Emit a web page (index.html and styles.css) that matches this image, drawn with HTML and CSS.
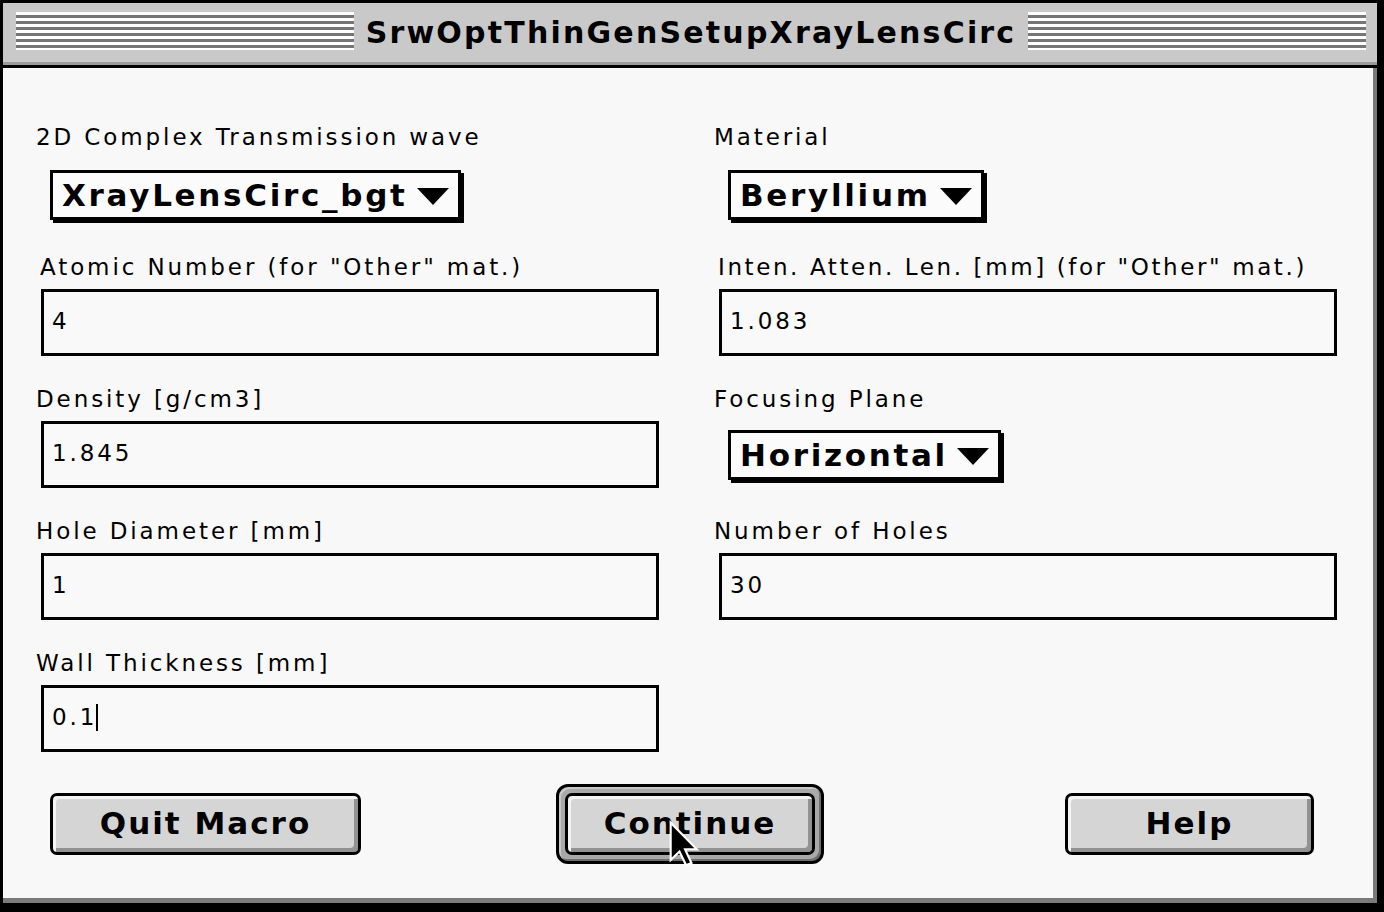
FILE: index.html
```html
<!DOCTYPE html>
<html>
<head>
<meta charset="utf-8">
<title>SrwOptThinGenSetupXrayLensCirc</title>
<link rel="stylesheet" href="styles.css">
</head>
<body>
<div class="window">
  <div class="titlebar">
    <div class="stripes"></div>
    <div class="title">SrwOptThinGenSetupXrayLensCirc</div>
    <div class="stripes"></div>
  </div>
  <div class="content">
    <div class="grid">
      <div class="field">
        <div class="label">2D Complex Transmission wave</div>
        <div class="popup popup-first"><span class="popup-text">XrayLensCirc_bgt</span><svg class="tri" viewBox="0 0 32 17" width="32" height="17"><polygon points="0,0 32,0 16,17" fill="#000"/></svg></div>
      </div>
      <div class="field">
        <div class="label">Material</div>
        <div class="popup popup-first"><span class="popup-text">Beryllium</span><svg class="tri" viewBox="0 0 32 17" width="32" height="17"><polygon points="0,0 32,0 16,17" fill="#000"/></svg></div>
      </div>

      <div class="field">
        <div class="label indent">Atomic Number (for "Other" mat.)</div>
        <div class="input">4</div>
      </div>
      <div class="field">
        <div class="label indent tight">Inten. Atten. Len. [mm] (for "Other" mat.)</div>
        <div class="input">1.083</div>
      </div>

      <div class="field">
        <div class="label">Density [g/cm3]</div>
        <div class="input">1.845</div>
      </div>
      <div class="field">
        <div class="label">Focusing Plane</div>
        <div class="popup popup-mid"><span class="popup-text">Horizontal</span><svg class="tri" viewBox="0 0 32 17" width="32" height="17"><polygon points="0,0 32,0 16,17" fill="#000"/></svg></div>
      </div>

      <div class="field">
        <div class="label">Hole Diameter [mm]</div>
        <div class="input">1</div>
      </div>
      <div class="field">
        <div class="label">Number of Holes</div>
        <div class="input">30</div>
      </div>

      <div class="field">
        <div class="label">Wall Thickness [mm]</div>
        <div class="input">0.1<span class="caret"></span></div>
      </div>
    </div>

    <div class="buttons">
      <div class="btn btn-wide">Quit Macro</div>
      <div class="ring"><div class="btn">Continue</div></div>
      <div class="btn btn-help">Help</div>
    </div>
  </div>
  <svg class="cursor" viewBox="0 0 12 18" width="32" height="48">
    <path d="M1 1 L1 15 L4.3 11.8 L6.8 17 L8.8 16.1 L6.4 11 L10.8 11 Z" fill="#000" stroke="#fff" stroke-width="0.8" stroke-linejoin="miter"/>
  </svg>
</div>
</body>
</html>
```

FILE: styles.css
```css
html, body {
  margin: 0;
  padding: 0;
  background: #000;
}

.window {
  position: relative;
  width: 1384px;
  height: 912px;
  box-sizing: border-box;
  padding: 3px 7px 9px 3px;
  background: #000;
  display: flex;
  flex-direction: column;
}

.titlebar {
  flex: none;
  height: 62px;
  box-sizing: border-box;
  display: flex;
  align-items: flex-start;
  gap: 12px;
  padding: 9px 11px 0 13px;
  background: #c9c9c9;
  border-bottom: 3px solid #9a9a9a;
  margin-bottom: 3px;
}

.stripes {
  flex: 1;
  height: 38px;
  background: repeating-linear-gradient(to bottom, #ffffff 0 3px, #767676 3px 6px);
}

.title {
  font-family: "DejaVu Sans", "Liberation Sans", sans-serif;
  font-weight: bold;
  font-size: 30px;
  letter-spacing: 2.2px;
  line-height: 38px;
  margin-top: 2px;
  color: #000;
  white-space: nowrap;
}

.content {
  flex: 1;
  background: #f8f8f8;
  border-right: 4px solid #7a7a7a;
  border-bottom: 5px solid #7a7a7a;
  padding: 56px 0 0 33px;
  font-family: "DejaVu Sans", "Liberation Sans", sans-serif;
  color: #000;
}

.grid {
  display: grid;
  grid-template-columns: 678px 1fr;
  row-gap: 30px;
}

.field {
  display: flex;
  flex-direction: column;
  align-items: flex-start;
}

.label {
  height: 26px;
  line-height: 26px;
  font-size: 23px;
  letter-spacing: 2.9px;
  white-space: nowrap;
}

.label.indent {
  padding-left: 4px;
}

.label.tight {
  letter-spacing: 2.6px;
}

.input {
  margin: 9px 0 0 5px;
  width: 618px;
  height: 67px;
  box-sizing: border-box;
  border: 3px solid #000;
  background: #f9f9f9;
  padding: 16px 0 0 8px;
  font-size: 23px;
  line-height: 26px;
  letter-spacing: 2.9px;
  white-space: nowrap;
}

.caret {
  display: inline-block;
  width: 2px;
  height: 27px;
  background: #000;
  vertical-align: -6px;
  margin-left: -1px;
}

.popup {
  display: inline-flex;
  align-items: center;
  gap: 9px;
  height: 50px;
  box-sizing: border-box;
  border: 3px solid #000;
  box-shadow: 3px 3px 0 #000;
  background: #fbfbfb;
  padding: 0 9px 0 9px;
  margin-left: 14px;
}

.popup-first {
  margin-top: 20px;
  margin-bottom: 4px;
}

.popup-mid {
  margin-top: 18px;
}

.popup-text {
  font-weight: bold;
  font-size: 31px;
  letter-spacing: 2.7px;
  line-height: 40px;
  white-space: nowrap;
}

.tri {
  display: block;
  flex: none;
  margin-top: 2px;
}

.buttons {
  display: grid;
  grid-template-columns: 1fr auto 1fr;
  align-items: center;
  margin-top: 32px;
  padding: 0 43px 0 14px;
}

.btn {
  width: 250px;
  height: 62px;
  box-sizing: border-box;
  border: 3px solid #000;
  border-radius: 7px;
  background: #d5d5d5;
  box-shadow: inset 3px 3px 0 #f3f3f3, inset -4px -4px 0 #929292;
  display: flex;
  align-items: center;
  justify-content: center;
  font-weight: bold;
  font-size: 31px;
  letter-spacing: 2px;
  white-space: nowrap;
  padding-bottom: 2px;
}

.btn-wide {
  width: 311px;
  justify-self: start;
}

.btn-help {
  width: 249px;
  justify-self: end;
  margin-right: 16px;
}

.ring {
  border: 3px solid #000;
  border-radius: 12px;
  padding: 6px;
  background: #a9a9a9;
  box-shadow: inset 2px 2px 0 #c8c8c8, inset -2px -2px 0 #6e6e6e;
}

.cursor {
  position: absolute;
  left: 668px;
  top: 820px;
}
```
